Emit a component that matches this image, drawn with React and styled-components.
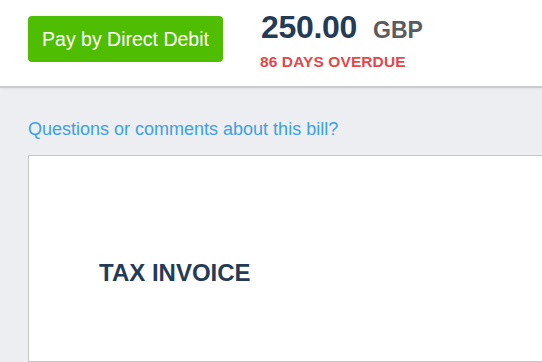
import React from 'react';
import styled, { createGlobalStyle } from 'styled-components';

const GlobalStyle = createGlobalStyle`
    html, body {
        margin: 0;
        padding: 0;
        background: #eceef1;
        overflow: hidden;
        font-family: "Liberation Sans", Arial, sans-serif;
    }
`;

const Page = styled.div`
    width: 100%;
    height: 362px;
    display: flex;
    flex-direction: column;
    overflow: hidden;
`;

const Header = styled.header`
    height: 88px;
    box-sizing: border-box;
    display: flex;
    align-items: flex-start;
    gap: 38px;
    padding: 16px 28px 0;
    background: #fff;
    border-bottom: 2px solid #cbcccf;
    box-shadow: 0 1px 2px rgba(0, 0, 0, 0.06);
`;

const PayButton = styled.button`
    width: 195px;
    height: 46px;
    border: none;
    border-radius: 4px;
    background: #4fbe02;
    color: #fff;
    font-family: inherit;
    font-size: 19.5px;
    padding: 0;
    cursor: pointer;
`;

const AmountBox = styled.div`
    display: flex;
    flex-direction: column;
    margin-top: -5px;
`;

const Amount = styled.div`
    font-size: 32px;
    line-height: 32px;
    font-weight: 700;
    color: #243b56;
    letter-spacing: -0.3px;
`;

const Currency = styled.span`
    font-size: 23px;
    font-weight: 700;
    color: #5a5b5e;
    margin-left: 16px;
    letter-spacing: 0;
`;

const Overdue = styled.div`
    margin-top: 8px;
    margin-left: -1px;
    font-size: 15.5px;
    line-height: 15.5px;
    font-weight: 700;
    letter-spacing: 0.1px;
    color: #e2474b;
`;

const Body = styled.main`
    flex: 1;
    display: flex;
    flex-direction: column;
    padding: 31px 0 0 28px;
`;

const BillLink = styled.a`
    font-size: 18px;
    line-height: 21.6px;
    color: #3ea0e2;
    text-decoration: none;
`;

const Document = styled.div`
    margin-top: 14px;
    width: 560px;
    flex: 1;
    background: #fff;
    border: 1px solid #c6c7ca;
    padding: 103.5px 0 0 70px;
`;

const DocTitle = styled.h1`
    margin: 0;
    font-size: 24px;
    line-height: 28.8px;
    font-weight: 700;
    color: #243b56;
`;

export default () => {
    return (
        <Page>
            <GlobalStyle />
            <Header>
                <PayButton>Pay by Direct Debit</PayButton>
                <AmountBox>
                    <Amount>
                        250.00<Currency>GBP</Currency>
                    </Amount>
                    <Overdue>86 DAYS OVERDUE</Overdue>
                </AmountBox>
            </Header>
            <Body>
                <BillLink href="#">Questions or comments about this bill?</BillLink>
                <Document>
                    <DocTitle>TAX INVOICE</DocTitle>
                </Document>
            </Body>
        </Page>
    );
};
